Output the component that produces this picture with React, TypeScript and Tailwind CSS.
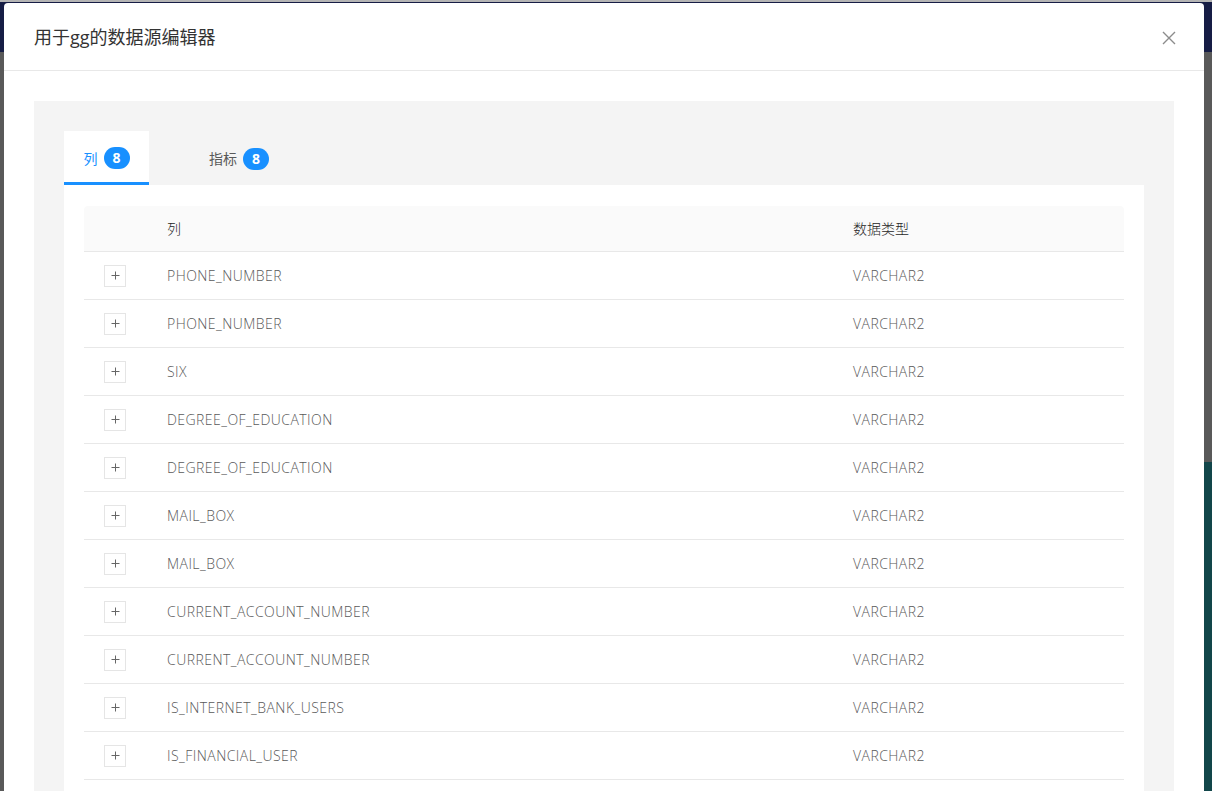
import React from 'react'

const rows = [
  'PHONE_NUMBER',
  'PHONE_NUMBER',
  'SIX',
  'DEGREE_OF_EDUCATION',
  'DEGREE_OF_EDUCATION',
  'MAIL_BOX',
  'MAIL_BOX',
  'CURRENT_ACCOUNT_NUMBER',
  'CURRENT_ACCOUNT_NUMBER',
  'IS_INTERNET_BANK_USERS',
  'IS_FINANCIAL_USER',
]

const font = { fontFamily: '"Open Sans", "Noto Sans CJK SC", sans-serif' }

function Badge({ n }: { n: number }) {
  return (
    <span className="ml-[6px] inline-flex h-[22px] min-w-[26px] items-center justify-center rounded-full bg-[#1890ff] px-[7px] text-[14px] font-bold leading-none text-white">
      {n}
    </span>
  )
}

export default function App() {
  return (
    <div className="relative h-[791px] w-[1212px] overflow-hidden bg-[#595959]" style={font}>
      {/* page behind the mask */}
      <div className="h-[2px] bg-[#b4b4b4]" />
      <div className="h-[50px] bg-[#161d45]" />
      <div className="flex h-[739px] justify-end">
        <div className="mt-[410px] w-[8px] bg-[#12464a]" />
      </div>

      {/* modal */}
      <div className="absolute left-[4px] top-[3px] flex h-[800px] w-[1200px] flex-col rounded-t-[4px] bg-white">
        <div className="flex h-[68px] shrink-0 items-center justify-between border-b border-[#e8e8e8] pl-[30px] pr-[28px]">
          <div className="mt-[1px] text-[18px] text-[#333333]">用于gg的数据源编辑器</div>
          <svg width="14" height="14" viewBox="0 0 14 14" className="mt-[2px]">
            <path d="M1 1 L13 13 M13 1 L1 13" stroke="#8c8c8c" strokeWidth="1.4" />
          </svg>
        </div>

        <div className="px-[30px] pt-[30px]">
          <div className="bg-[#f4f4f4] px-[30px] pt-[30px]">
            {/* tabs */}
            <div className="flex h-[54px] items-stretch text-[14px]">
              <div className="flex w-[85px] items-center justify-center border-b-[3px] border-[#1890ff] bg-white pt-[3px] text-[#1890ff]">
                <span>列</span>
                <Badge n={8} />
              </div>
              <div className="ml-[60px] flex items-center pt-[1px] text-[#595959]">
                <span>指标</span>
                <Badge n={8} />
              </div>
            </div>

            {/* table */}
            <div className="bg-white px-[20px] pt-[21px] pb-[20px]">
              <div className="flex h-[46px] items-center rounded-t-[4px] border-b border-[#e8e8e8] bg-[#fafafa] text-[14px] font-light text-[#262626]">
                <div className="w-[83px]" />
                <div className="w-[686px]">列</div>
                <div>数据类型</div>
              </div>
              {rows.map((r, i) => (
                <div
                  key={i}
                  className="flex h-[48px] items-center border-b border-[#e8e8e8] text-[14px] font-light tracking-[0.45px] text-[#595959]"
                >
                  <div className="w-[83px] pl-[20px]">
                    <div className="flex h-[22px] w-[22px] items-center justify-center border border-[#e5e5e5]">
                      <svg width="9" height="9" viewBox="0 0 9 9">
                        <path d="M4.5 0.5 V8.5 M0.5 4.5 H8.5" stroke="#666666" strokeWidth="1" />
                      </svg>
                    </div>
                  </div>
                  <div className="w-[686px]">{r}</div>
                  <div>VARCHAR2</div>
                </div>
              ))}
            </div>
          </div>
        </div>
      </div>
    </div>
  )
}
